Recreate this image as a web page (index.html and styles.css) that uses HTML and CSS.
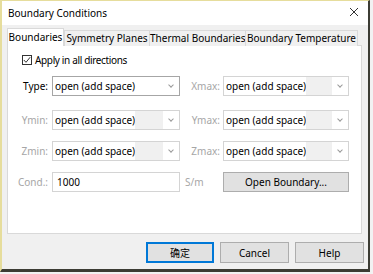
FILE: index.html
```html
<!DOCTYPE html>
<html>
<head>
<meta charset="utf-8">
<link rel="stylesheet" href="styles.css">
</head>
<body>
<div class="window">
  <div class="titlebar">
    <span class="title">Boundary Conditions</span>
    <svg class="close" width="10" height="10" viewBox="0 0 10 10"><path d="M1 1 L9 9 M9 1 L1 9" stroke="#333" stroke-width="1" fill="none"/></svg>
  </div>
  <div class="client">
    <div class="tabs">
      <div class="tab active t1">Boundaries</div>
      <div class="tab t2">Symmetry Planes</div>
      <div class="tab t3">Thermal Boundaries</div>
      <div class="tab t4">Boundary Temperature</div>
    </div>
    <div class="panel">
      <label class="check">
        <span class="box"><svg width="8" height="8" viewBox="0 0 8 8"><path d="M0.8 4 L3 6.3 L7.2 1.2" stroke="#333" stroke-width="1" fill="none"/></svg></span>
        <span class="checktext">Apply in all directions</span>
      </label>
      <div class="row r1">
        <span class="lbl">Type:</span>
        <div class="combo"><span class="val">open (add space)</span><span class="arrow"></span></div>
        <span class="lbl lbl2 dis">Xmax:</span>
        <div class="combo off"><span class="val">open (add space)</span><span class="fill"></span><span class="arrow"></span></div>
      </div>
      <div class="row r2">
        <span class="lbl dis">Ymin:</span>
        <div class="combo off"><span class="val">open (add space)</span><span class="fill"></span><span class="arrow"></span></div>
        <span class="lbl lbl2 dis">Ymax:</span>
        <div class="combo off"><span class="val">open (add space)</span><span class="fill"></span><span class="arrow"></span></div>
      </div>
      <div class="row r3">
        <span class="lbl dis">Zmin:</span>
        <div class="combo off"><span class="val">open (add space)</span><span class="fill"></span><span class="arrow"></span></div>
        <span class="lbl lbl2 dis">Zmax:</span>
        <div class="combo off"><span class="val">open (add space)</span><span class="fill"></span><span class="arrow"></span></div>
      </div>
      <div class="row r4">
        <span class="lbl dis">Cond.:</span>
        <div class="edit">1000</div>
        <span class="unit dis">S/m</span>
        <div class="btn obtn">Open Boundary...</div>
      </div>
    </div>
    <div class="footer">
      <div class="btn def">确定</div>
      <div class="btn">Cancel</div>
      <div class="btn">Help</div>
    </div>
  </div>
</div>
</body>
</html>
```

FILE: styles.css
```css
html, body {
  margin: 0;
  padding: 0;
  background: #f2f2f2;
}
body {
  font-family: "Noto Sans", "Noto Sans CJK SC", sans-serif;
  font-size: 10px;
  color: #000;
  width: 373px;
  height: 274px;
  overflow: hidden;
}
.window {
  width: 366px;
  height: 268px;
  border-left: 2px solid #e6dd9c;
  border-top: 1px solid #e6dd9c;
  border-right: 2px solid #3c3c34;
  border-bottom: 3px solid #3c3c34;
  display: flex;
  flex-direction: column;
  background: #f0f0f0;
}
.titlebar {
  height: 24px;
  flex: none;
  background: #fff;
  display: flex;
  align-items: center;
  justify-content: space-between;
  padding: 0 9px 0 6px;
  font-size: 10px;
}
.title { margin-top: -1px; }
.close { margin-top: -2px; }
.client {
  flex: 1;
  padding: 3px 4px 0 5px;
  display: flex;
  flex-direction: column;
}
.tabs {
  display: flex;
  align-items: flex-end;
  height: 18px;
  position: relative;
  z-index: 1;
  margin-bottom: -1px;
}
.tab {
  height: 16px;
  line-height: 15px;
  box-sizing: border-box;
  text-align: center;
  border: 1px solid #d9d9d9;
  border-bottom: none;
  background: #f0f0f0;
  margin-left: -1px;
  white-space: nowrap;
}
.tab.active {
  height: 18px;
  line-height: 17px;
  background: #fff;
  margin-left: 0;
  margin-right: 1px;
}
.t1 { width: 57px; }
.t2 { width: 86px; }
.t3 { width: 97px; }
.t4 { width: 113px; }
.panel {
  background: #fff;
  border: 1px solid #d9d9d9;
  height: 189px;
  width: 355px;
  padding-top: 9px;
  box-sizing: border-box;
  flex: none;
}
.check {
  display: flex;
  align-items: center;
  gap: 3px;
  height: 10px;
  padding-left: 14px;
}
.checktext { letter-spacing: -0.35px; }
.box {
  width: 10px;
  height: 10px;
  border: 1px solid #333;
  box-sizing: border-box;
  display: flex;
  align-items: center;
  justify-content: center;
}
.row {
  display: grid;
  grid-template-columns: 44px 128px 43px 126px;
  column-gap: 0;
  height: 20px;
  align-items: center;
}
.row > * { min-width: 0; box-sizing: border-box; }
.row > :nth-child(1) { grid-column: 1; }
.row > :nth-child(2) { grid-column: 2; width: 128px; }
.row > :nth-child(3) { grid-column: 3; width: 43px; }
.row > :nth-child(4) { grid-column: 4; width: 126px; }
.r1 { margin-top: 11px; }
.r2 { margin-top: 14px; }
.r3 { margin-top: 11px; }
.r4 { margin-top: 11px; }
.lbl {
  white-space: nowrap;
  text-align: right;
  padding-right: 4px;
}
.lbl2 { padding-right: 3px; }
.unit { padding-left: 5px; white-space: nowrap; }
.dis { color: #a6a6a6; }
.combo, .edit {
  height: 20px;
  box-sizing: border-box;
  border: 1px solid #a6a6a6;
  background: #fff;
  display: flex;
  align-items: center;
  padding-left: 2px;
}
.val { flex: none; }
.combo .arrow { margin-left: auto; }
.combo.off { border-color: #d4d4d4; }
.combo.off .fill {
  flex: 1;
  align-self: stretch;
  background: #f0f0f0;
}
.combo.off .arrow { margin-left: 0; }
.arrow {
  width: 16px;
  flex: none;
  display: flex;
  align-items: center;
  justify-content: center;
}
.arrow::before {
  content: "";
  width: 3px;
  height: 3px;
  border-right: 1px solid #9a9a9a;
  border-bottom: 1px solid #9a9a9a;
  transform: rotate(45deg);
  margin-top: -2px;
  margin-left: -1px;
}
.edit {
  border-color: #d4d4d4;
  padding-left: 4px;
}
.btn {
  height: 20px;
  box-sizing: border-box;
  border: 1px solid #adadad;
  background: #e1e1e1;
  display: flex;
  align-items: center;
  justify-content: center;
}
.footer {
  display: flex;
  justify-content: flex-end;
  gap: 6px;
  padding-top: 8px;
}
.footer .btn { width: 69px; height: 21px; }
.footer .btn.def {
  width: 68px;
  border: 2px solid #0078d7;
}
```
